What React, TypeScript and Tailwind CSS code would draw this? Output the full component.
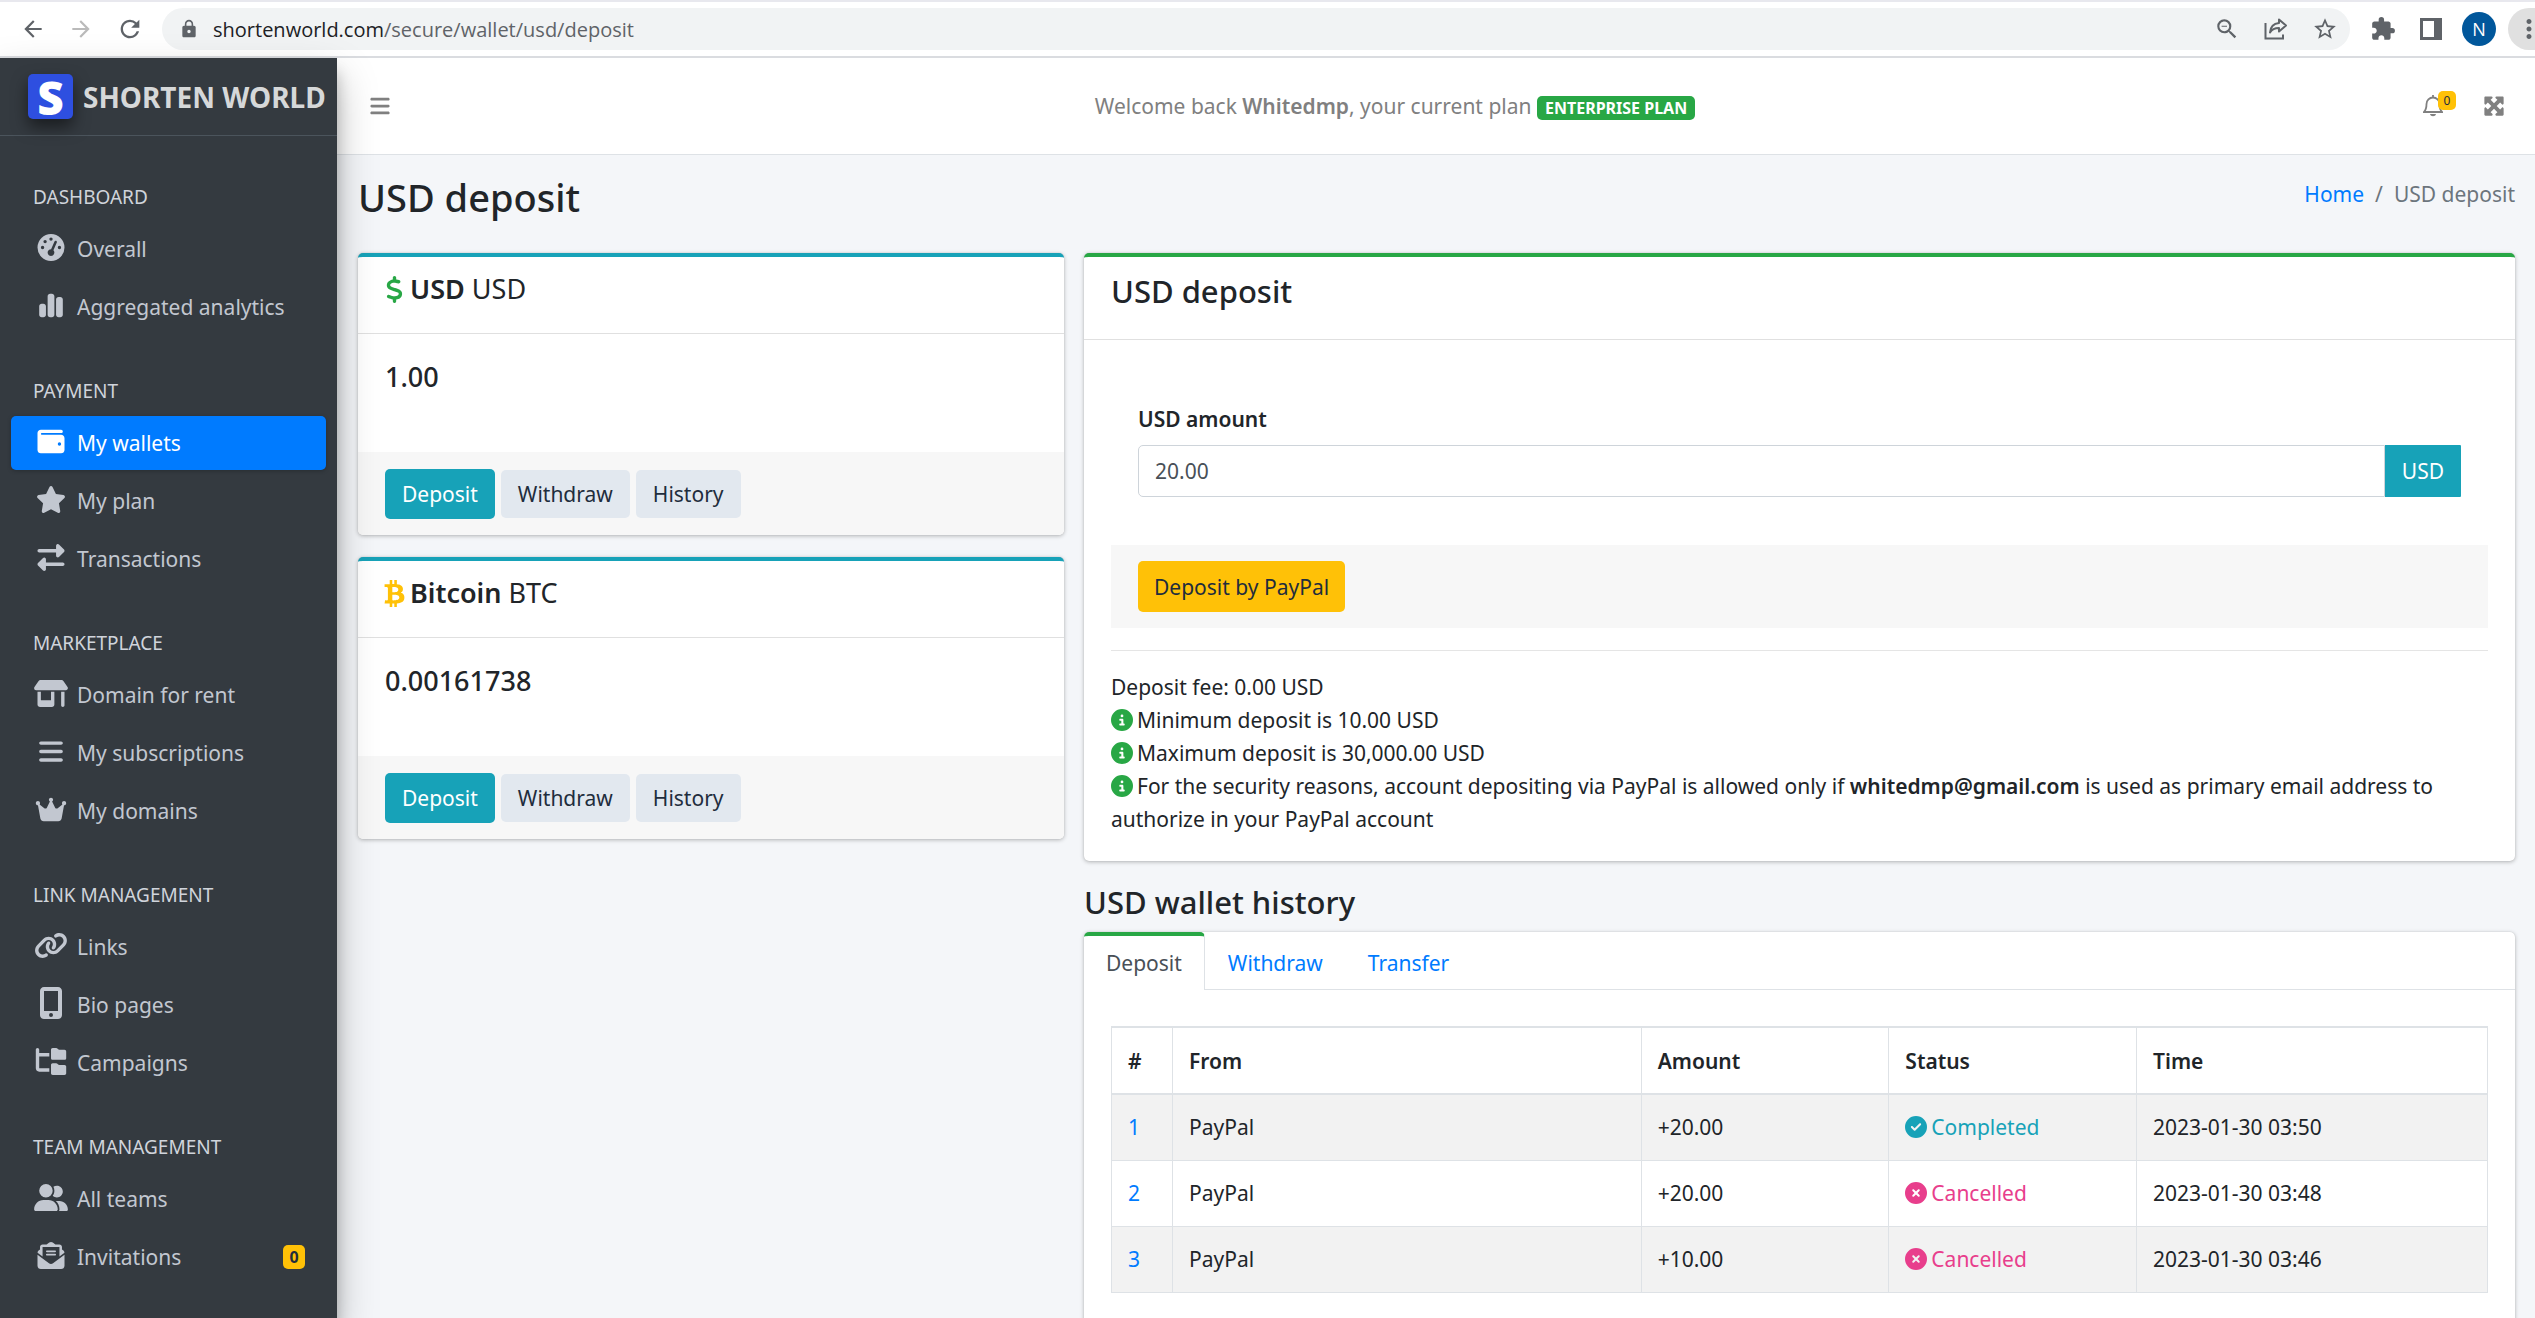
import type { ReactNode } from "react";
import type { IconType } from "react-icons";
import {
  FaBars,
  FaBtc,
  FaChartSimple,
  FaCircleCheck,
  FaCircleInfo,
  FaCircleXmark,
  FaCrown,
  FaDollarSign,
  FaEnvelopeOpenText,
  FaFolderTree,
  FaGaugeHigh,
  FaLink,
  FaMaximize,
  FaMobileScreenButton,
  FaRightLeft,
  FaShop,
  FaStar,
  FaUserGroup,
  FaWallet,
} from "react-icons/fa6";
import {
  MdArrowBack,
  MdArrowForward,
  MdExtension,
  MdLock,
  MdMoreVert,
  MdRefresh,
  MdStarBorder,
  MdZoomOut,
} from "react-icons/md";

type NavItem = { label: string; Icon: IconType; active?: boolean; tall?: boolean; badge?: string };

const NAV: { title: string; items: NavItem[] }[] = [
  {
    title: "DASHBOARD",
    items: [
      { label: "Overall", Icon: FaGaugeHigh },
      { label: "Aggregated analytics", Icon: FaChartSimple },
    ],
  },
  {
    title: "PAYMENT",
    items: [
      { label: "My wallets", Icon: FaWallet, active: true },
      { label: "My plan", Icon: FaStar },
      { label: "Transactions", Icon: FaRightLeft },
    ],
  },
  {
    title: "MARKETPLACE",
    items: [
      { label: "Domain for rent", Icon: FaShop },
      { label: "My subscriptions", Icon: FaBars },
      { label: "My domains", Icon: FaCrown },
    ],
  },
  {
    title: "LINK MANAGEMENT",
    items: [
      { label: "Links", Icon: FaLink },
      { label: "Bio pages", Icon: FaMobileScreenButton, tall: true },
      { label: "Campaigns", Icon: FaFolderTree },
    ],
  },
  {
    title: "TEAM MANAGEMENT",
    items: [
      { label: "All teams", Icon: FaUserGroup },
      { label: "Invitations", Icon: FaEnvelopeOpenText, badge: "0" },
    ],
  },
];

const HISTORY = [
  { id: 1, from: "PayPal", amount: "+20.00", status: "Completed", time: "2023-01-30 03:50" },
  { id: 2, from: "PayPal", amount: "+20.00", status: "Cancelled", time: "2023-01-30 03:48" },
  { id: 3, from: "PayPal", amount: "+10.00", status: "Cancelled", time: "2023-01-30 03:46" },
];

const CARD = "bg-white rounded-[5px] shadow-[0_0_1px_rgba(0,0,0,0.17),0_1px_4px_rgba(0,0,0,0.27)]";

function BrowserBar() {
  return (
    <div className="h-[58px] flex items-center bg-white border-t-2 border-t-[#e8e8ee] border-b-2 border-b-[#dadce0] text-[#5f6368] pl-5">
      <button aria-label="Back" className="w-[26px] mr-[22px]">
        <MdArrowBack size={26} />
      </button>
      <button aria-label="Forward" className="w-[26px] mr-[22px] text-[#bababa]">
        <MdArrowForward size={26} />
      </button>
      <button aria-label="Reload" className="w-[26px] mr-5">
        <MdRefresh size={28} />
      </button>
      <div className="flex-1 h-[42px] rounded-full bg-[#f1f3f4] flex items-center pl-[17px] pr-3">
        <MdLock size={20} />
        <span className="ml-3.5 pt-0.5 flex-1 text-xl font-['Open_Sans',sans-serif]">
          <span className="text-[#202124]">shortenworld.com</span>/secure/wallet/usd/deposit
        </span>
        <div className="flex items-center gap-6">
          <button aria-label="Zoom">
            <MdZoomOut size={26} />
          </button>
          <button aria-label="Share">
            <ShareIcon />
          </button>
          <button aria-label="Bookmark">
            <MdStarBorder size={26} />
          </button>
        </div>
      </div>
      <div className="flex items-center ml-5">
        <button aria-label="Extensions">
          <MdExtension size={26} />
        </button>
        <button aria-label="Side panel" className="ml-6">
          <svg width="22" height="22" viewBox="0 0 22 22">
            <path fill="currentColor" d="M0 0h22v22H0zM3 3v16h11V3z" fillRule="evenodd" />
          </svg>
        </button>
        <button
          aria-label="Profile"
          className="ml-5 size-[34px] rounded-full bg-[#01579b] text-white text-lg font-['Open_Sans',sans-serif]"
        >
          N
        </button>
        <button
          aria-label="Menu"
          className="ml-3 w-[27px] h-[42px] rounded-l-full bg-[#e0e0e0] flex items-center pl-1.5 overflow-hidden"
        >
          <MdMoreVert size={30} className="shrink-0" />
        </button>
      </div>
    </div>
  );
}

function ShareIcon() {
  return (
    <svg width="24" height="24" viewBox="0 0 24 24" fill="none" stroke="currentColor" strokeWidth="2">
      <path d="M1.500 6v15.500h17.500v-4" />
      <path d="M15 2.500l7 6-7 6v-3.500c-4 0-7 1-9 4.500.5-6 4-9 9-9.500z" strokeLinejoin="round" />
    </svg>
  );
}

function Bell() {
  return (
    <svg width="20" height="22" viewBox="0 0 20 22" fill="none" stroke="currentColor" strokeWidth="1.800">
      <path d="M10 0v2M1 17c2-2 2.500-4 2.500-8a6.500 6.500 0 0 1 13 0c0 4 .5 6 2.500 8z" />
      <path d="M7 19h6c-.5 3-5.500 3-6 0z" fill="currentColor" stroke="none" />
    </svg>
  );
}

function Sidebar() {
  return (
    <aside className="relative z-10 w-[337px] shrink-0 bg-[#343a40] text-[#c2c7d0] shadow-[0_19px_38px_rgba(0,0,0,0.25),0_14px_14px_rgba(0,0,0,0.22)]">
      <a href="#" className="flex items-center h-[78px] pl-7 border-b border-[#4b545c]">
        <span className="size-[45px] rounded-[5px] bg-[#2e4fe0] text-white text-[46px] leading-[44px] font-extrabold font-['Open_Sans',sans-serif] flex items-center justify-center shadow-[0_8px_16px_rgba(0,0,0,0.5)]">
          S
        </span>
        <span className="ml-2.5 text-[28px] font-bold text-[#d6d8d9] whitespace-nowrap">SHORTEN WORLD</span>
      </a>
      <nav className="px-[11px] pt-2">
        {NAV.map((group) => (
          <div key={group.title}>
            <h2 className="h-[78px] pl-[22px] pt-[41px] text-[19px] leading-6 text-[#d0d4db]">{group.title}</h2>
            {group.items.map(({ label, Icon, active, tall, badge }) => (
              <a
                key={label}
                href="#"
                className={`flex items-center h-[54px] mb-1 pl-[22px] pr-[21px] rounded-[5px] text-[21px] ${
                  active ? "bg-[#007bff] text-white shadow-[0_1px_4px_rgba(0,0,0,0.24)]" : ""
                }`}
              >
                <span className="w-9 mr-2 pb-1 flex justify-center">
                  <Icon className={tall ? "h-8 w-[34px]" : "h-[27px] w-[34px]"} />
                </span>
                <span className="flex-1">{label}</span>
                {badge && (
                  <span className="w-[22px] h-6 rounded-[5px] bg-[#ffc107] text-[#1f2d3d] text-base font-bold flex items-center justify-center">
                    {badge}
                  </span>
                )}
              </a>
            ))}
          </div>
        ))}
      </nav>
    </aside>
  );
}

function WalletCard({ icon, name, code, balance }: { icon: ReactNode; name: string; code: string; balance: string }) {
  return (
    <section className={`${CARD} border-t-4 border-[#17a2b8] overflow-hidden`}>
      <h3 className="flex items-center gap-1.5 h-[77px] pl-[27px] pb-3 border-b border-black/12 text-[27px]">
        {icon}
        <span>
          <strong className="font-semibold">{name}</strong> {code}
        </span>
      </h3>
      <p className="h-[118px] px-[27px] pt-[27px] text-[27px] leading-8 font-medium">{balance}</p>
      <div className="flex items-center gap-1.5 h-[83px] px-[27px] bg-[#f7f7f7]">
        <button className="h-[50px] px-[17px] rounded-[5px] bg-[#17a2b8] text-white">Deposit</button>
        <button className="h-12 px-[17px] rounded-[5px] bg-[#e2e8ef] text-[#1f2d3d]">Withdraw</button>
        <button className="h-12 px-[17px] rounded-[5px] bg-[#e2e8ef] text-[#1f2d3d]">History</button>
      </div>
    </section>
  );
}

function Info({ children }: { children: ReactNode }) {
  return (
    <p>
      <FaCircleInfo size={22} className="inline align-[-3px] mr-1 text-[#28a745]" />
      {children}
    </p>
  );
}

function DepositCard() {
  return (
    <section className={`${CARD} border-t-4 border-[#28a745]`}>
      <h2 className="h-[83px] px-[27px] pt-3.5 border-b border-black/12 text-[31px] leading-10 font-medium">
        USD deposit
      </h2>
      <div className="px-[27px] pt-[61px] pb-[25px]">
        <form className="px-[27px]">
          <label htmlFor="amount" className="block mb-2 font-semibold leading-9">
            USD amount
          </label>
          <div className="flex h-[52px]">
            <input
              id="amount"
              defaultValue="20.00"
              className="flex-1 min-w-0 px-4 rounded-l-[5px] border border-[#ced4da] text-[#495057]"
            />
            <span className="px-[17px] flex items-center rounded-r-[1px] bg-[#17a2b8] text-white">USD</span>
          </div>
        </form>
        <div className="mt-12 h-[83px] px-[27px] flex items-center bg-[#f7f7f7]">
          <button className="h-[51px] px-4 rounded-[5px] bg-[#ffc107] text-[#1f2d3d]">Deposit by PayPal</button>
        </div>
        <hr className="mt-[22px] mb-5 border-black/10" />
        <div className="leading-[33px]">
          <p>Deposit fee: 0.00 USD</p>
          <Info>Minimum deposit is 10.00 USD</Info>
          <Info>Maximum deposit is 30,000.00 USD</Info>
          <Info>
            For the security reasons, account depositing via PayPal is allowed only if{" "}
            <strong className="font-semibold">whitedmp@gmail.com</strong> is used as primary email address to
            authorize in your PayPal account
          </Info>
        </div>
      </div>
    </section>
  );
}

function HistoryTable() {
  return (
    <table className="w-full border-collapse border border-[#dee2e6] text-left">
      <colgroup>
        <col className="w-[61px]" />
        <col />
        <col className="w-[18%]" />
        <col className="w-[18%]" />
        <col className="w-[351px]" />
      </colgroup>
      <thead>
        <tr className="h-[67px] border-y-2 border-[#dee2e6]">
          {["#", "From", "Amount", "Status", "Time"].map((h) => (
            <th key={h} className="px-4 font-semibold border-x border-[#dee2e6]">
              {h}
            </th>
          ))}
        </tr>
      </thead>
      <tbody>
        {HISTORY.map((row) => (
          <tr key={row.id} className="h-[66px] border-b border-[#dee2e6] odd:bg-[#f2f2f2]">
            <td className="px-4 border-x border-[#dee2e6]">
              <a href="#" className="text-[#007bff]">
                {row.id}
              </a>
            </td>
            <td className="px-4 border-x border-[#dee2e6]">{row.from}</td>
            <td className="px-4 border-x border-[#dee2e6]">{row.amount}</td>
            <td className="px-4 border-x border-[#dee2e6]">
              {row.status === "Completed" ? (
                <span className="flex items-center gap-1 text-[#17a2b8]">
                  <FaCircleCheck size={22} />
                  {row.status}
                </span>
              ) : (
                <span className="flex items-center gap-1 text-[#e83e8c]">
                  <FaCircleXmark size={22} />
                  {row.status}
                </span>
              )}
            </td>
            <td className="px-4 border-x border-[#dee2e6]">{row.time}</td>
          </tr>
        ))}
      </tbody>
    </table>
  );
}

export default function App() {
  return (
    <div className="h-screen flex flex-col overflow-hidden text-[21px] leading-8 text-[#212529] font-['Noto_Sans',sans-serif]">
      <BrowserBar />
      <div className="flex flex-1 min-h-0">
        <Sidebar />
        <div className="flex-1 min-w-0 flex flex-col bg-[#f4f6f9]">
          <header className="flex items-center h-[97px] shrink-0 pl-8 pr-[30px] bg-white border-b border-[#dee2e6] text-[#808080]">
            <button aria-label="Toggle menu">
              <FaBars size={22} />
            </button>
            <p className="flex-1 pr-6 text-center">
              Welcome back <strong className="font-semibold">Whitedmp</strong>, your current plan{" "}
              <span className="inline-block rounded-[5px] bg-[#28a745] px-2 text-base leading-6 font-bold text-white">
                ENTERPRISE PLAN
              </span>
            </p>
            <button aria-label="Notifications" className="relative mr-10">
              <Bell />
              <span className="absolute -top-1 left-[15px] w-[18px] h-[19px] rounded-[5px] bg-[#ffc107] text-[#1f2d3d] text-xs leading-[19px]">
                0
              </span>
            </button>
            <button aria-label="Fullscreen">
              <FaMaximize size={22} />
            </button>
          </header>
          <main className="pl-[21px] pr-5">
            <div className="flex justify-between h-[98px] pt-[18px]">
              <h1 className="text-[38px] leading-12 font-medium">USD deposit</h1>
              <nav aria-label="Breadcrumb" className="flex gap-[11px] pt-[5px] text-[#6c757d]">
                <a href="#" className="text-[#007bff]">
                  Home
                </a>
                <span>/</span>
                <span>USD deposit</span>
              </nav>
            </div>
            <div className="grid grid-cols-[706fr_1431fr] gap-5">
              <div className="flex flex-col gap-[22px]">
                <WalletCard
                  icon={<FaDollarSign size={27} className="-mx-1 text-[#28a745]" />}
                  name="USD"
                  code="USD"
                  balance="1.00"
                />
                <WalletCard
                  icon={<FaBtc size={27} className="-mx-1 text-[#ffc107]" />}
                  name="Bitcoin"
                  code="BTC"
                  balance="0.00161738"
                />
              </div>
              <div>
                <DepositCard />
                <h2 className="mt-[21px] mb-2.5 text-[31px] leading-10 font-medium">USD wallet history</h2>
                <section className={CARD}>
                  <div role="tablist" className="flex h-[58px] border-b border-[#dee2e6]">
                    <button
                      role="tab"
                      aria-selected="true"
                      className="-mb-px px-[22px] bg-white border-t-4 border-t-[#28a745] border-r border-r-[#dee2e6] rounded-t-[5px] text-[#495057]"
                    >
                      Deposit
                    </button>
                    <button
                      role="tab"
                      aria-selected="false"
                      className="px-[23px] border-t-4 border-transparent text-[#007bff]"
                    >
                      Withdraw
                    </button>
                    <button
                      role="tab"
                      aria-selected="false"
                      className="px-[22px] border-t-4 border-transparent text-[#007bff]"
                    >
                      Transfer
                    </button>
                  </div>
                  <div className="px-[27px] pt-9 pb-12">
                    <HistoryTable />
                  </div>
                </section>
              </div>
            </div>
          </main>
        </div>
      </div>
    </div>
  );
}
